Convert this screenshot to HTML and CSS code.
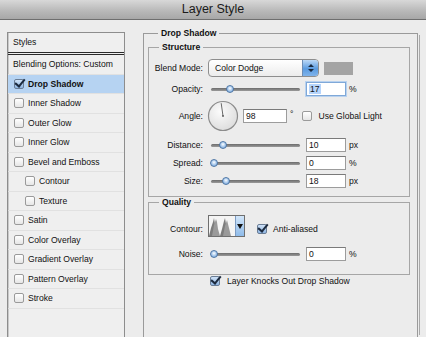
FILE: index.html
```html
<!DOCTYPE html>
<html lang="en">
<head>
  <meta charset="UTF-8" />
  <title>Layer Style</title>
  <link rel="stylesheet" href="styles.css">
</head>
<body>
  <div class="titlebar">Layer Style</div>

  <div class="content">
    <div class="styles-panel">
      <div class="panel-head">Styles</div>
      <ul class="style-list">
        <li class="plain">Blending Options: Custom</li>
        <li class="selected"><span class="cb checked"></span>Drop Shadow</li>
        <li><span class="cb"></span>Inner Shadow</li>
        <li><span class="cb"></span>Outer Glow</li>
        <li><span class="cb"></span>Inner Glow</li>
        <li><span class="cb"></span>Bevel and Emboss</li>
        <li class="sub"><span class="cb"></span>Contour</li>
        <li class="sub"><span class="cb"></span>Texture</li>
        <li><span class="cb"></span>Satin</li>
        <li><span class="cb"></span>Color Overlay</li>
        <li><span class="cb"></span>Gradient Overlay</li>
        <li><span class="cb"></span>Pattern Overlay</li>
        <li><span class="cb"></span>Stroke</li>
      </ul>
    </div>

    <fieldset class="group outer">
      <legend>Drop Shadow</legend>

      <fieldset class="group structure">
        <legend>Structure</legend>

        <div class="row">
          <span class="lbl">Blend Mode:</span>
          <div class="select">
            <span class="select-text">Color Dodge</span>
            <span class="select-btn">
              <svg width="8" height="10" viewBox="0 0 8 10"><path d="M4 1 L7 4 L1 4 Z M1 6 L7 6 L4 9 Z" fill="#1a2a40"/></svg>
            </span>
          </div>
          <span class="swatch"></span>
        </div>

        <div class="row opacity-row">
          <span class="lbl">Opacity:</span>
          <div class="slider"><span class="knob" style="left: 15px"></span></div>
          <span class="field focused"><span class="sel">17</span></span>
          <span class="unit">%</span>
        </div>

        <div class="row angle-row">
          <span class="lbl">Angle:</span>
          <svg class="dial" width="32" height="32" viewBox="0 0 32 32">
            <defs>
              <radialGradient id="dialFill" cx="0.4" cy="0.35" r="0.7">
                <stop offset="0" stop-color="#fbfbfb"/>
                <stop offset="1" stop-color="#dcdcdc"/>
              </radialGradient>
            </defs>
            <circle cx="16" cy="16" r="14.5" fill="url(#dialFill)" stroke="#8c8c8c" stroke-width="1.2"/>
            <line x1="16" y1="16" x2="14.2" y2="3.2" stroke="#6a6a6a" stroke-width="1"/>
            <circle cx="16" cy="16" r="0.9" fill="#555"/>
          </svg>
          <span class="field angle-field">98</span>
          <span class="unit deg">°</span>
          <span class="cb"></span>
          <span class="cb-label">Use Global Light</span>
        </div>

        <div class="row">
          <span class="lbl">Distance:</span>
          <div class="slider"><span class="knob" style="left: 8px"></span></div>
          <span class="field">10</span>
          <span class="unit">px</span>
        </div>

        <div class="row">
          <span class="lbl">Spread:</span>
          <div class="slider"><span class="knob" style="left: -1px"></span></div>
          <span class="field">0</span>
          <span class="unit">%</span>
        </div>

        <div class="row">
          <span class="lbl">Size:</span>
          <div class="slider"><span class="knob" style="left: 11px"></span></div>
          <span class="field">18</span>
          <span class="unit">px</span>
        </div>
      </fieldset>

      <fieldset class="group quality">
        <legend>Quality</legend>

        <div class="row contour-row">
          <span class="lbl">Contour:</span>
          <div class="contour">
            <svg class="contour-pic" width="26" height="20" viewBox="0 0 26 20">
              <rect width="26" height="20" fill="#f4f4f4"/>
              <path d="M0 20 L2 12 L4 6 L5 2 L6 8 L8 14 L9 18 L10 20 Z" fill="#7c7c7c"/>
              <path d="M3 20 L5 9 L7 3 L8 6 L9 13 L11 20 Z" fill="#9a9a9a"/>
              <path d="M11 20 L13 13 L15 5 L16 2 L17 8 L19 15 L20 20 Z" fill="#7c7c7c"/>
              <path d="M14 20 L16 10 L18 4 L19 8 L21 16 L22 20 Z" fill="#9a9a9a"/>
            </svg>
            <span class="contour-btn">
              <svg width="6" height="5" viewBox="0 0 6 5"><path d="M0 0 H6 L3 5 Z" fill="#111"/></svg>
            </span>
          </div>
          <span class="cb checked"></span>
          <span class="cb-label">Anti-aliased</span>
        </div>

        <div class="row">
          <span class="lbl">Noise:</span>
          <div class="slider"><span class="knob" style="left: -1px"></span></div>
          <span class="field">0</span>
          <span class="unit">%</span>
        </div>
      </fieldset>

      <div class="knockout">
        <span class="cb checked"></span>
        <span class="cb-label">Layer Knocks Out Drop Shadow</span>
      </div>
    </fieldset>
  </div>
</body>
</html>
```

FILE: styles.css
```css
html,
body {
  height: 337px;
  overflow: hidden;
}

body {
  margin: 0;
  font-family: "Liberation Sans", Arial, sans-serif;
  font-size: 8.6px;
  color: #111;
  background: #ececec;
}

.titlebar {
  height: 19px;
  line-height: 19px;
  text-align: center;
  font-size: 12.5px;
  color: #1a1a1a;
  background: linear-gradient(#d8d8d8, #b7b7b7 60%, #a7a7a7);
  border-bottom: 1px solid #6e6e6e;
}

.content {
  display: flex;
  height: 317px;
  box-sizing: border-box;
  padding: 12px 0 0 7px;
  overflow: hidden;
}

/* left list */

.styles-panel {
  width: 116px;
  border: 1px solid #8d8d8d;
  border-bottom: none;
  box-shadow: inset 1px 0 0 #c9c9c9;
  background: #efefef;
}

.panel-head {
  height: 19px;
  line-height: 19px;
  padding-left: 5px;
  border-bottom: 3px double #2a2a2a;
}

.style-list {
  list-style: none;
  margin: 0;
  padding: 0;
}

.style-list li {
  display: flex;
  align-items: center;
  height: 18.5px;
  padding-left: 6px;
  border-bottom: 1px solid #e1e1e1;
}

.style-list li.plain {
  padding-left: 5px;
}

.style-list li.sub {
  padding-left: 17px;
}

.style-list li.selected {
  background: #b6d3f2;
  font-weight: bold;
}

/* checkboxes */

.cb {
  display: inline-block;
  flex: none;
  width: 8px;
  height: 8px;
  margin-right: 4px;
  border: 1px solid #9a9a9a;
  border-radius: 2px;
  background: linear-gradient(#ffffff, #e6e6e6);
  position: relative;
}

.cb.checked {
  border-color: #6a7d95;
  background: linear-gradient(#cfe2f7, #8fb6e3);
}

.cb.checked::after {
  content: "";
  position: absolute;
  left: 2px;
  top: -3px;
  width: 4px;
  height: 8px;
  border-right: 2px solid #1c2a3e;
  border-bottom: 2px solid #1c2a3e;
  transform: rotate(40deg);
}

.cb-label {
  white-space: nowrap;
}

/* group boxes */

.group {
  margin: 0;
  border: 1px solid #a6a6a6;
  min-width: 0;
}

.group legend {
  padding: 0 3px;
  margin-left: 10px;
  line-height: 11px;
  font-weight: bold;
}

.outer {
  width: 262px;
  margin-left: 18px;
  margin-top: -4.5px;
  padding: 3px 7px 0 4px;
  border-color: #9a9a9a;
  border-bottom: none;
  box-shadow: 3px 0 0 -2px #ececec, 4px 0 0 -2px #a9a9a9;
}

.structure {
  padding: 6.5px 0 6px 0;
}

.quality {
  margin-top: 0;
  padding: 7px 0 11px 0;
}

.row {
  display: flex;
  align-items: center;
  height: 18px;
}

.opacity-row {
  margin-top: 3px;
}

.lbl {
  width: 54px;
  flex: none;
  text-align: right;
  margin-right: 5px;
}

/* blend select */

.select {
  display: flex;
  width: 109px;
  height: 16px;
  border: 1px solid #8e8e8e;
  border-radius: 4px;
  background: linear-gradient(#ffffff, #ececec);
  overflow: hidden;
}

.select-text {
  flex: 1;
  line-height: 16px;
  padding-left: 6px;
}

.select-btn {
  width: 15px;
  display: flex;
  align-items: center;
  justify-content: center;
  background: linear-gradient(#bcd9f7, #5a9be0 55%, #7fb3ea);
  border-left: 1px solid #6c8db5;
}

.swatch {
  width: 29px;
  height: 13px;
  margin-left: 5px;
  background: #a4a4a4;
}

/* slider */

.slider {
  position: relative;
  width: 89px;
  height: 3px;
  margin: 0 6px 0 3px;
  border-radius: 2px;
  background: linear-gradient(#6c6c6c, #9a9a9a);
}

.knob {
  position: absolute;
  top: -3px;
  width: 8px;
  height: 8px;
  border-radius: 50%;
  border: 1px solid #4f77a6;
  background: radial-gradient(circle at 50% 40%, #ffffff 0, #b8d3f0 40%, #6a9fd9 100%);
  box-sizing: border-box;
}

/* number field */

.field {
  box-sizing: border-box;
  width: 40px;
  height: 14px;
  line-height: 12px;
  padding-left: 2px;
  background: #fff;
  border: 1px solid #9c9c9c;
  border-top-color: #7a7a7a;
}

.field.focused {
  border-color: #7fa8d8;
  box-shadow: 0 0 0 1px #b9d2ef;
}

.field .sel {
  background: #b5d4fb;
  padding: 0 1px;
}

.unit {
  margin-left: 3px;
}

.angle-row {
  height: 32px;
  margin: 2px 0 4px;
}

.dial {
  flex: none;
  margin-left: -1px;
  margin-right: 4px;
}

.angle-field {
  width: 44px;
}

.deg {
  margin-right: 9px;
  align-self: flex-start;
  margin-top: 9px;
}

.angle-row .cb {
  margin-right: 6px;
}

/* contour */

.contour-row {
  height: 22px;
  align-items: flex-end;
  margin-bottom: 8px;
}

.contour-row .lbl {
  margin-bottom: 3px;
}

.contour {
  display: flex;
  height: 20px;
  border: 1px solid #6f6f6f;
  margin-right: 12px;
}

.contour-btn {
  width: 8px;
  display: flex;
  align-items: center;
  justify-content: center;
  background: linear-gradient(#d2e6fa, #8fbbe9);
  border-left: 1px solid #7d9cc3;
}

.contour-row .cb {
  margin-bottom: 3px;
  margin-right: 6px;
}

.contour-row .cb-label {
  margin-bottom: 3px;
}

.knockout {
  display: flex;
  align-items: center;
  padding: 1px 0 0 62px;
}

.knockout .cb {
  margin-right: 7px;
}
```
